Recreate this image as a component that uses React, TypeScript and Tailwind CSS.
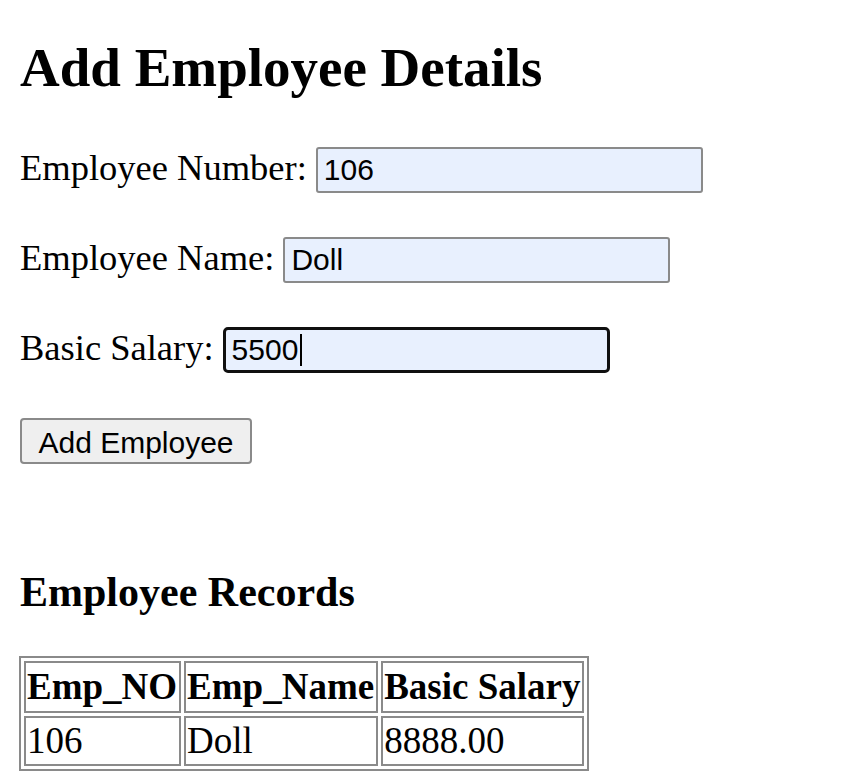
import { useState } from 'react'

const serif = { fontFamily: '"Liberation Serif", "Times New Roman", serif' }

type Row = { no: string; name: string; salary: string }

const records: Row[] = [{ no: '106', name: 'Doll', salary: '8888.00' }]

function Field({
  label,
  value,
  focused,
  className,
}: {
  label: string
  value: string
  focused?: boolean
  className?: string
}) {
  return (
    <div className={`flex items-baseline gap-[9px] ${className ?? ''}`}>
      <span className="text-[36.5px] leading-[40px] text-black" style={serif}>
        {label}
      </span>
      <div className="relative">
        <input
          readOnly
          value={value}
          className={`w-[387px] h-[46px] px-[6px] bg-[#e8f0fe] text-[30px] text-black font-['Liberation_Sans',Arial,sans-serif] outline-none ${
            focused
              ? 'border-[3px] border-[#101010] rounded-[5px]'
              : 'border-2 border-[#8a8a8a] rounded-[3px]'
          }`}
        />
        {focused && (
          <span className="absolute left-[77px] top-[7px] w-[2px] h-[32px] bg-black" />
        )}
      </div>
    </div>
  )
}

export default function App() {
  const [rows] = useState(records)

  return (
    <div className="min-h-screen bg-white px-[20px] text-black" style={serif}>
      <h1 className="mt-[37px] text-[55px] leading-[62px] font-bold">
        Add Employee Details
      </h1>

      <Field className="mt-[48px]" label="Employee Number:" value="106" />
      <Field className="mt-[44px]" label="Employee Name:" value="Doll" />
      <Field className="mt-[44px]" label="Basic Salary:" value="5500" focused />

      <button className="mt-[45px] w-[232px] h-[46px] bg-[#efefef] border-2 border-[#8a8a8a] rounded-[4px] text-[30px] text-black font-['Liberation_Sans',Arial,sans-serif]">
        Add Employee
      </button>

      <h2 className="mt-[104px] text-[42px] leading-[48px] font-bold">
        Employee Records
      </h2>

      <table className="mt-[40px] -ml-px border-separate border-spacing-[3px] border-2 border-[#8a8a8a] text-[37px] leading-[42px]">
        <thead>
          <tr>
            <th className="border-2 border-[#8a8a8a] pl-px pr-[2px] py-[3px] text-left font-bold">
              Emp_NO
            </th>
            <th className="border-2 border-[#8a8a8a] pl-px pr-[2px] py-[3px] text-left font-bold">
              Emp_Name
            </th>
            <th className="border-2 border-[#8a8a8a] pl-px pr-[2px] py-[3px] text-left font-bold">
              Basic Salary
            </th>
          </tr>
        </thead>
        <tbody>
          {rows.map((r) => (
            <tr key={r.no}>
              <td className="border-2 border-[#8a8a8a] pl-px pr-[2px] py-[2px]">{r.no}</td>
              <td className="border-2 border-[#8a8a8a] pl-px pr-[2px] py-[2px]">{r.name}</td>
              <td className="border-2 border-[#8a8a8a] pl-px pr-[2px] py-[2px]">{r.salary}</td>
            </tr>
          ))}
        </tbody>
      </table>
    </div>
  )
}
